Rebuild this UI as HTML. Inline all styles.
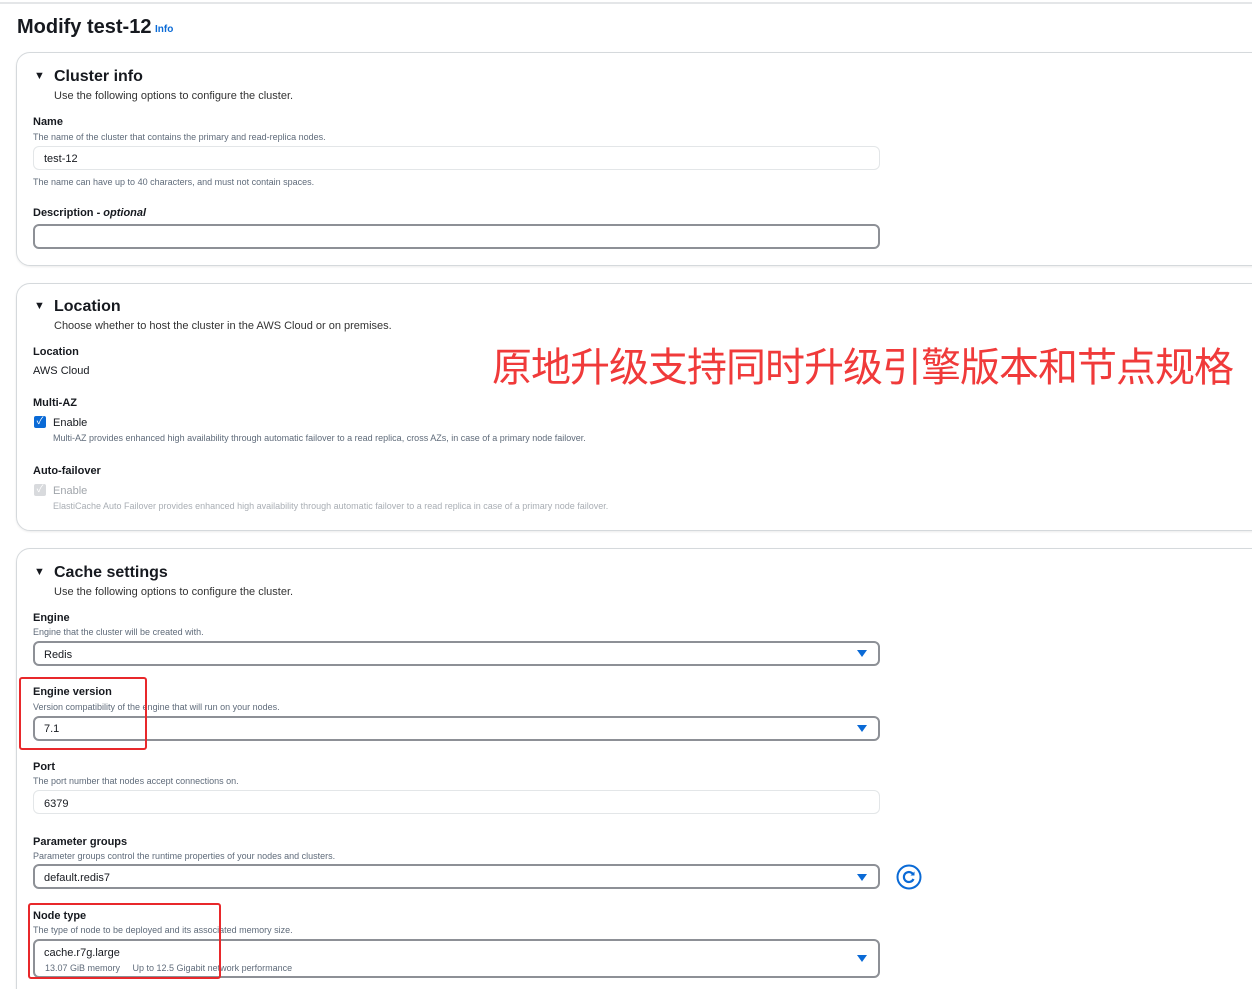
<!DOCTYPE html>
<html style="width:1252px;height:989px;overflow:hidden"><head><meta charset="utf-8"><style>
body{margin:0;width:1252px;height:989px;background:#fff;position:relative;overflow:hidden;font-family:"Liberation Sans","Noto Sans CJK SC",sans-serif;color:#16191f}
div,span{position:absolute;line-height:1;white-space:nowrap}
.card{left:16px;width:1260px;border:1px solid #d5d9dc;border-radius:14px;box-shadow:0 1px 2px rgba(0,0,0,.08)}
.h{font-size:16px;font-weight:bold;left:54px;color:#16191f;margin-top:2px}
.tri{left:34px;font-size:11px;margin-top:2px}
.d{font-size:11px;left:54px;color:#333;margin-top:2px}
.l{font-size:11px;font-weight:bold;left:33px;margin-top:2px}
.s{font-size:9px;left:33px;color:#5f6b7a;margin-top:2px}
.in{left:33px;width:845px;height:22px;border:1px solid #e3e6e8;border-radius:6px}
.sel{left:33px;width:843px;height:21px;border:2px solid #8d9096;border-radius:6px}
.v{font-size:11px;left:44px;margin-top:2px}
.ar{left:857px;width:0;height:0;border-left:5px solid transparent;border-right:5px solid transparent;border-top:7px solid #0a6ad6}
.red{border:2px solid #e8282b;border-radius:3px}
</style></head><body>
<div style="left:0;top:2px;width:1252px;height:2px;background:#e4e6e8"></div>
<div style="left:17px;top:17px;font-size:20px;font-weight:bold">Modify test-12</div>
<div style="left:155px;top:25px;font-size:10px;font-weight:bold;color:#0a6ad6">Info</div>

<div class="card" style="top:52px;height:212px"></div>
<div class="tri" style="top:69px">▼</div>
<div class="h" style="top:67px">Cluster info</div>
<div class="d" style="top:89px">Use the following options to configure the cluster.</div>
<div class="l" style="top:115px">Name</div>
<div class="s" style="top:131px">The name of the cluster that contains the primary and read-replica nodes.</div>
<div class="in" style="top:146px"></div>
<div class="v" style="top:152px">test-12</div>
<div class="s" style="top:176px">The name can have up to 40 characters, and must not contain spaces.</div>
<div class="l" style="top:206px">Description - <i>optional</i></div>
<div class="sel" style="top:224px"></div>

<div class="card" style="top:283px;height:246px"></div>
<div class="tri" style="top:299px">▼</div>
<div class="h" style="top:297px">Location</div>
<div class="d" style="top:319px">Choose whether to host the cluster in the AWS Cloud or on premises.</div>
<div class="l" style="top:345px">Location</div>
<div class="v" style="top:364px;left:33px">AWS Cloud</div>
<div class="l" style="top:396px">Multi-AZ</div>
<div style="left:34px;top:416px;width:12px;height:12px;background:#0a6ad6;border-radius:2px;color:#fff;font-size:10px;text-align:center;line-height:12px">✓</div>
<div class="v" style="top:416px;left:53px">Enable</div>
<div class="s" style="top:432px;left:53px">Multi-AZ provides enhanced high availability through automatic failover to a read replica, cross AZs, in case of a primary node failover.</div>
<div class="l" style="top:464px">Auto-failover</div>
<div style="left:34px;top:484px;width:12px;height:12px;background:#d8dadd;border-radius:2px;color:#fff;font-size:10px;text-align:center;line-height:12px">✓</div>
<div class="v" style="top:484px;left:53px;color:#a0a5ab">Enable</div>
<div class="s" style="top:500px;left:53px;color:#a9aeb4">ElastiCache Auto Failover provides enhanced high availability through automatic failover to a read replica in case of a primary node failover.</div>
<div style="left:492px;top:344px;font-size:40px;color:#f03a3a;font-family:'Noto Sans CJK SC',sans-serif;letter-spacing:-1px">原地升级支持同时升级引擎版本和节点规格</div>

<div class="card" style="top:548px;height:460px"></div>
<div class="tri" style="top:565px">▼</div>
<div class="h" style="top:563px">Cache settings</div>
<div class="d" style="top:585px">Use the following options to configure the cluster.</div>
<div class="l" style="top:611px">Engine</div>
<div class="s" style="top:626px">Engine that the cluster will be created with.</div>
<div class="sel" style="top:641px"></div><div class="v" style="top:648px">Redis</div><div class="ar" style="top:650px"></div>
<div class="l" style="top:685px">Engine version</div>
<div class="s" style="top:701px">Version compatibility of the engine that will run on your nodes.</div>
<div class="sel" style="top:716px"></div><div class="v" style="top:722px">7.1</div><div class="ar" style="top:725px"></div>
<div class="l" style="top:760px">Port</div>
<div class="s" style="top:775px">The port number that nodes accept connections on.</div>
<div class="in" style="top:790px"></div><div class="v" style="top:797px">6379</div>
<div class="l" style="top:835px">Parameter groups</div>
<div class="s" style="top:850px">Parameter groups control the runtime properties of your nodes and clusters.</div>
<div class="sel" style="top:864px"></div><div class="v" style="top:871px">default.redis7</div><div class="ar" style="top:874px"></div>
<svg style="position:absolute;left:896px;top:864px" width="26" height="26" viewBox="0 0 26 26"><circle cx="13" cy="13" r="11.5" fill="none" stroke="#0a6ad6" stroke-width="2"/><path d="M17.5 11A5 5 0 1 0 17.5 15" fill="none" stroke="#0a6ad6" stroke-width="2.2"/><path d="M14.5 11.5L18.5 11.5L18.5 7.5Z" fill="#0a6ad6"/></svg>
<div class="l" style="top:909px">Node type</div>
<div class="s" style="top:924px">The type of node to be deployed and its associated memory size.</div>
<div class="sel" style="top:939px;height:35px"></div>
<div class="v" style="top:946px">cache.r7g.large</div>
<div class="s" style="top:962px;left:45px">13.07 GiB memory &nbsp;&nbsp;&nbsp; Up to 12.5 Gigabit network performance</div>
<div class="ar" style="top:955px"></div>

<div class="red" style="left:19px;top:677px;width:124px;height:69px"></div>
<div class="red" style="left:28px;top:903px;width:189px;height:72px"></div>
</body></html>
